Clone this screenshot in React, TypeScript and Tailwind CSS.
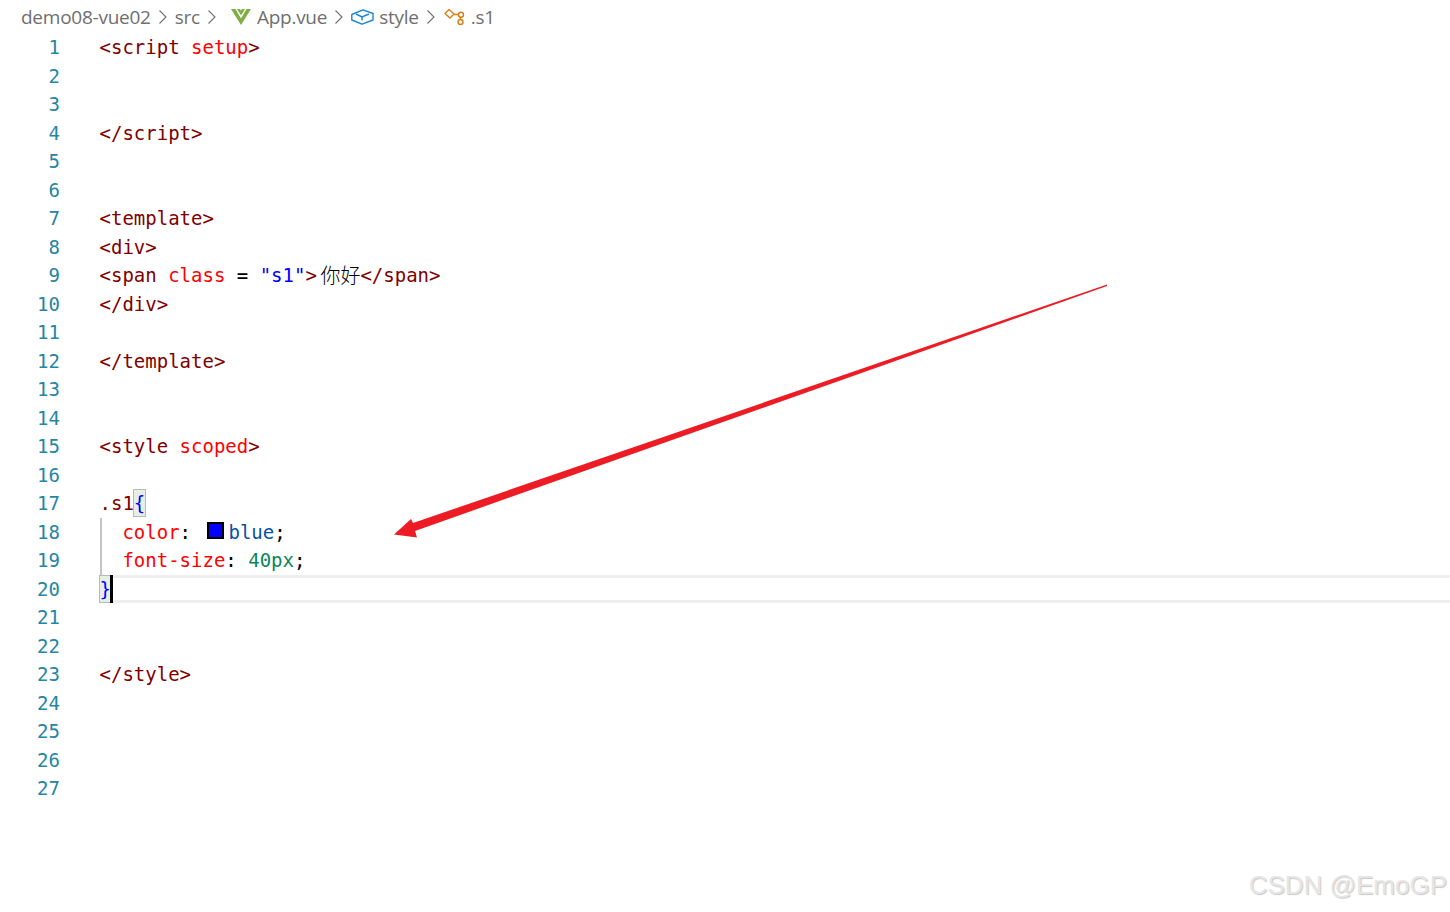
import type { ReactNode } from "react";

const TAG = "text-[#800000]";
const ATTR = "text-[#ff0000]";
const STR = "text-[#0000ff]";
const VAL = "text-[#0451a5]";
const NUM = "text-[#098658]";
const INK = "text-black";

type Tok = [string, string];

const lines: Record<number, Tok[]> = {
  1: [["<script", TAG], [" ", INK], ["setup", ATTR], [">", TAG]],
  4: [["</script>", TAG]],
  7: [["<template>", TAG]],
  8: [["<div>", TAG]],
  10: [["</div>", TAG]],
  12: [["</template>", TAG]],
  15: [["<style", TAG], [" ", INK], ["scoped", ATTR], [">", TAG]],
  23: [["</style>", TAG]],
};

function Chevron() {
  return (
    <svg aria-hidden="true" viewBox="0 0 10 16" className="h-4 w-2.5 shrink-0 text-[#6f6f6f]">
      <path d="M1.5 1.5 8 8l-6.5 6.5" fill="none" stroke="currentColor" strokeWidth="1.1" />
    </svg>
  );
}

function VueIcon() {
  return (
    <svg aria-hidden="true" viewBox="0 0 20 16" className="h-4 w-5 shrink-0">
      <path d="M0 0h4.500L10 9.500 15.500 0H20L10 16z" fill="#7fae42" />
      <path d="M6 0h3l1 1.800L11 0h3l-4 6.500z" fill="#7fae42" />
    </svg>
  );
}

function BoxIcon() {
  return (
    <svg aria-hidden="true" viewBox="0 0 23 16" className="h-4 w-[23px] shrink-0" fill="none" stroke="#1a85d4" strokeWidth="1.4">
      <path d="M.8 5.500 12 .8l10 3.700v6.500L11 15.200.8 11z" strokeLinejoin="round" />
      <path d="M5 5l6 3 7-3M11 8v3.500" />
    </svg>
  );
}

function ClassIcon() {
  return (
    <svg aria-hidden="true" viewBox="0 0 21 18" className="h-[18px] w-[21px] shrink-0" fill="none" stroke="#d67e16" strokeWidth="1.4">
      <path d="M1 5.500 5 1.500 10 6 6 10z" strokeLinejoin="round" />
      <path d="M10 6.500h4.500M16.500 9.200v2.300" />
      <circle cx="17" cy="6.700" r="2.500" />
      <circle cx="16.500" cy="14" r="2.500" />
    </svg>
  );
}

function Crumb({ children }: { children: ReactNode }) {
  return <span className="whitespace-nowrap">{children}</span>;
}

function Breadcrumbs() {
  return (
    <nav className="flex h-[33px] items-center pl-[21px] pt-[1px] font-['Open_Sans',sans-serif] text-[19px] tracking-[-0.25px] text-[#6f6f6f]">
      <Crumb>demo08-vue02</Crumb>
      <span className="ml-[7px]"><Chevron /></span>
      <span className="ml-[7px]"><Crumb>src</Crumb></span>
      <span className="ml-[7px]"><Chevron /></span>
      <span className="ml-[14px]"><VueIcon /></span>
      <span className="ml-[6px]"><Crumb>App.vue</Crumb></span>
      <span className="ml-[7px]"><Chevron /></span>
      <span className="ml-[7px]"><BoxIcon /></span>
      <span className="ml-[5px]"><Crumb>style</Crumb></span>
      <span className="ml-[7px]"><Chevron /></span>
      <span className="ml-[8px]"><ClassIcon /></span>
      <span className="ml-[6px]"><Crumb>.s1</Crumb></span>
    </nav>
  );
}

function Bracket({ children }: { children: ReactNode }) {
  return (
    <span className="-mx-px inline-block h-[28px] w-[13px] border border-[#b9b9b9] bg-[#e6efe6] text-center leading-[26px] text-[#0000ff]">
      {children}
    </span>
  );
}

function Guide() {
  return <span className="absolute left-0 top-0 h-full w-0.5 bg-[#c4c4c4]" />;
}

function CodeLine({ n }: { n: number }) {
  let body: ReactNode = null;
  if (lines[n]) {
    body = lines[n].map(([text, cls], i) => (
      <span key={i} className={cls}>{text}</span>
    ));
  } else if (n === 9) {
    body = (
      <>
        <span className={TAG}>&lt;span</span>
        <span className={ATTR}> class</span>
        <span className={INK}> = </span>
        <span className={STR}>"s1"</span>
        <span className={TAG}>&gt;</span>
        <span className="inline-block w-[43.5px] text-right font-['Noto_Sans_CJK_SC',sans-serif] text-[20px] font-light text-black">你好</span>
        <span className={TAG}>&lt;/span&gt;</span>
      </>
    );
  } else if (n === 17) {
    body = (
      <>
        <span className={TAG}>.s1</span>
        <Bracket>{"{"}</Bracket>
      </>
    );
  } else if (n === 18) {
    body = (
      <>
        <Guide />
        <span className={ATTR}>  color</span>
        <span className={INK}>: </span>
        <span className="mb-[2px] ml-[5px] mr-[4px] inline-block size-[17px] border-2 border-black bg-[#0000ff]" />
        <span className={VAL}>blue</span>
        <span className={INK}>;</span>
      </>
    );
  } else if (n === 19) {
    body = (
      <>
        <Guide />
        <span className={ATTR}>  font-size</span>
        <span className={INK}>: </span>
        <span className={NUM}>40px</span>
        <span className={INK}>;</span>
      </>
    );
  } else if (n === 20) {
    body = (
      <>
        <Bracket>{"}"}</Bracket>
        <span className="absolute left-[10px] -top-[3px] -bottom-[3px] w-[3px] bg-black" />
      </>
    );
  }

  return (
    <div className="flex h-[28.5px] items-center">
      <span className="w-[60px] shrink-0 text-right text-[#2586a3]">{n}</span>
      <div className={`relative ml-[39.500px] flex h-full flex-1 items-center whitespace-pre ${n === 20 ? "border-y-[3px] border-[#eeeeee]" : ""}`}>
        {body}
      </div>
    </div>
  );
}

export default function App() {
  const numbers = Array.from({ length: 27 }, (_, i) => i + 1);
  return (
    <div className="relative h-[912px] w-[1450px] overflow-hidden bg-white">
      <Breadcrumbs />
      <div className="font-['DejaVu_Sans_Mono',monospace] text-[19px]">
        {numbers.map((n) => (
          <CodeLine key={n} n={n} />
        ))}
      </div>
      <svg aria-hidden="true" viewBox="0 0 1450 912" className="pointer-events-none absolute inset-0 h-[912px] w-[1450px]">
        <path d="M1107 284.500 413 523 411 519 394 534.500 417 537.500 415 531 1107 286z" fill="#ed1c24" />
      </svg>
      <span className="absolute bottom-[7px] right-[3px] font-['Liberation_Sans',sans-serif] text-[26px] text-[#e6e6e6] [text-shadow:1px_1px_1px_#c8c8c8]">
        CSDN @EmoGP
      </span>
    </div>
  );
}
